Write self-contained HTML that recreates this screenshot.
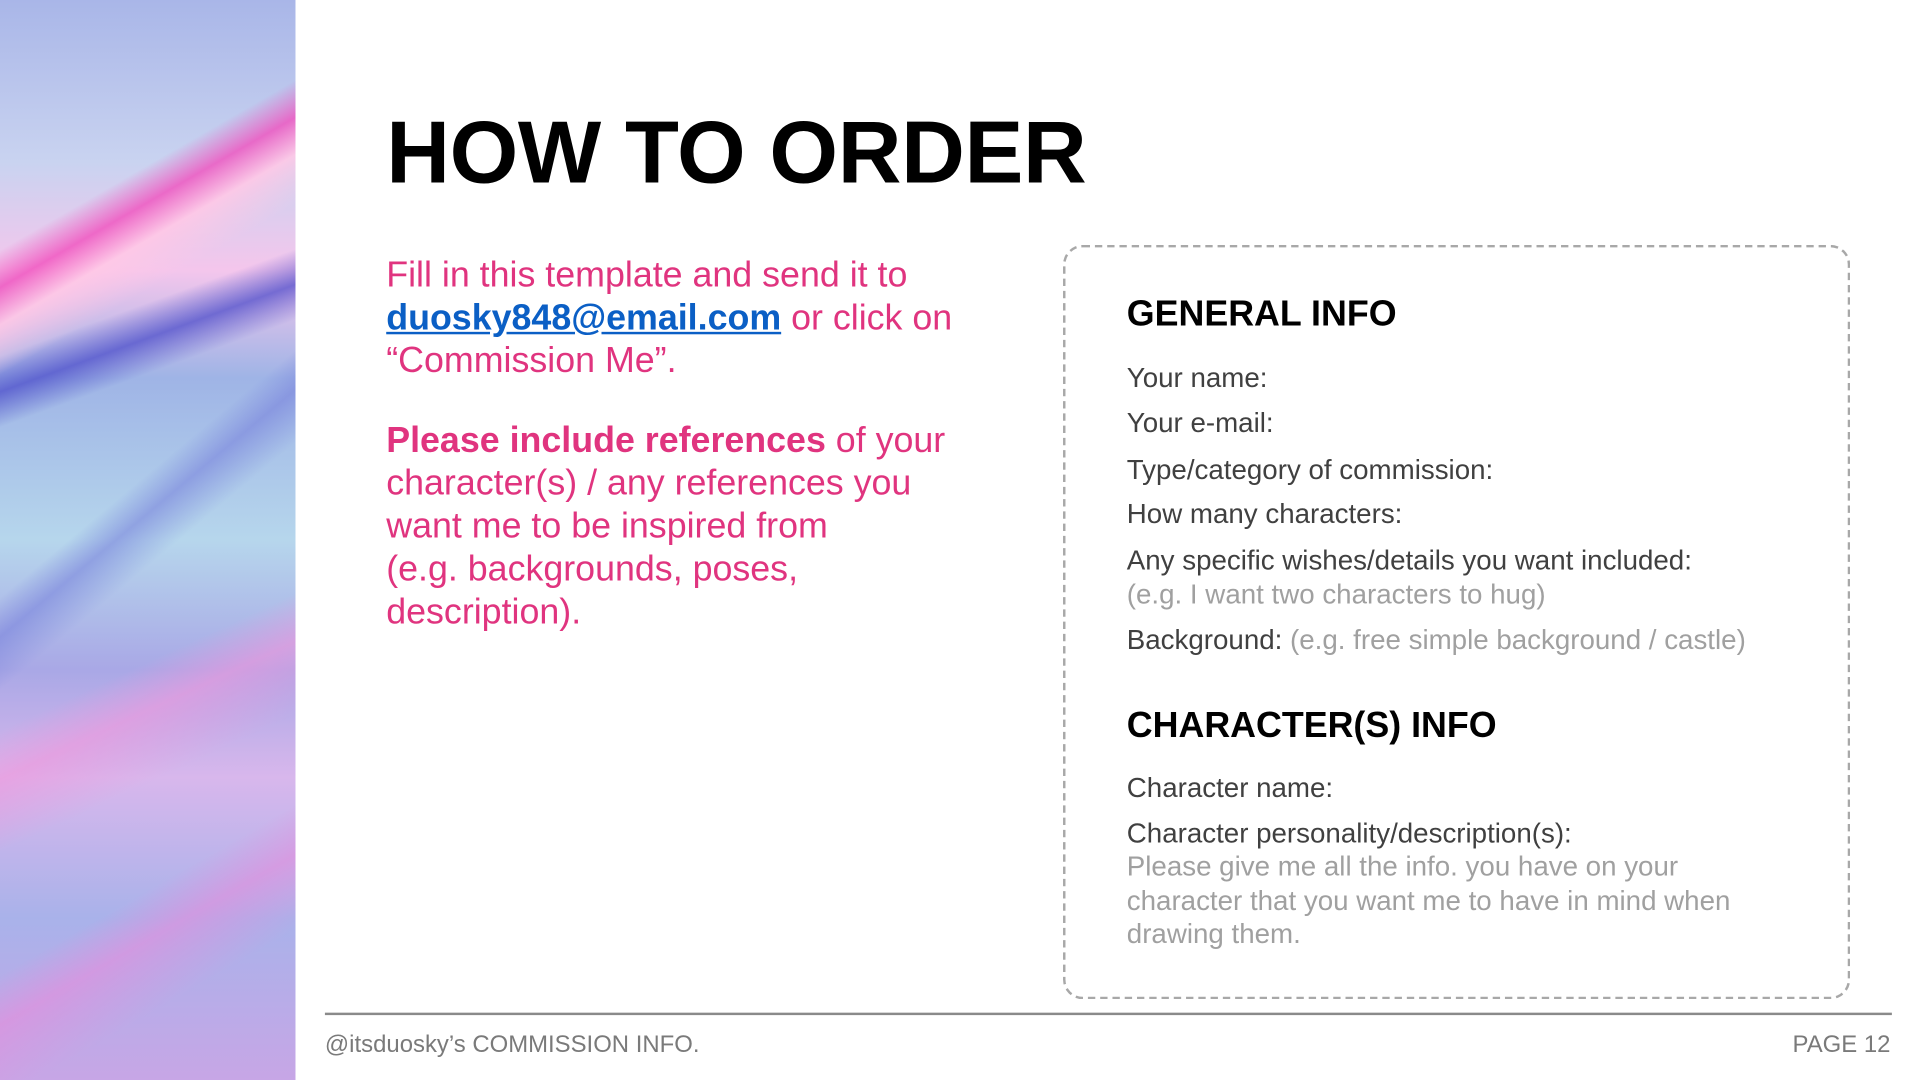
<!DOCTYPE html>
<html><head><meta charset="utf-8"><style>
html,body{margin:0;padding:0;width:1920px;height:1080px;overflow:hidden;background:#fff}
#s{position:absolute;left:0;top:0;width:1566px;height:882px;transform-origin:0 0;transform:scale(1.2261,1.2245);font-family:"Liberation Sans",Arial,sans-serif}
.marble{position:absolute;left:0;top:0;width:241px;height:882px;
background:
linear-gradient(150deg,transparent 20%,rgba(240,80,190,.8) 23%,rgba(255,200,230,.9) 26%,transparent 30%),
linear-gradient(160deg,transparent 30%,rgba(70,70,200,.7) 33%,transparent 36%),
linear-gradient(140deg,transparent 45%,rgba(120,130,220,.6) 48%,transparent 52%),
linear-gradient(155deg,transparent 60%,rgba(240,150,220,.6) 64%,transparent 70%),
linear-gradient(150deg,transparent 78%,rgba(230,140,220,.6) 82%,transparent 88%),
linear-gradient(180deg,#a9b6e8 0%,#c9d3f0 15%,#f4c6ec 25%,#9fb4e6 35%,#b6d6ec 50%,#a9a8e6 62%,#d8b7ec 72%,#a9b2ea 85%,#c7a6e6 100%)}
.t{position:absolute;white-space:nowrap}
h1{position:absolute;left:315px;top:84px;margin:0;font-size:72px;font-weight:bold;letter-spacing:-0.3px}
.left{position:absolute;left:315px;top:208px;font-size:29.2px;line-height:35px;color:#e0347f}
.left a{color:#0b5fc5;font-weight:bold;text-decoration:underline}
.box{position:absolute;left:867px;top:200px;width:638px;height:612px;border:2px dashed #a8a8a8;border-radius:16px}
.h{font-size:29.2px;font-weight:bold;color:#000}
.i{font-size:22.6px;color:#404040}
.g{color:#a0a0a0}
.line{position:absolute;left:265px;top:827px;width:1278px;height:2px;background:#8a8a8a}
.f{font-size:19.5px;color:#7a7a7a}
</style></head><body><div id="s">
<div class="marble"></div>
<h1>HOW TO ORDER</h1>
<div class="left">Fill in this template and send it to<br><a>duosky848@email.com</a> or click on<br>“Commission Me”.<br><div style="height:30px"></div><b>Please include references</b> of your<br>character(s) / any references you<br>want me to be inspired from<br>(e.g. backgrounds, poses,<br>description).</div>
<div class="box"></div>
<div class="t h" style="left:919px;top:241px">GENERAL INFO</div>
<div class="t i" style="left:919px;top:296px">Your name:</div>
<div class="t i" style="left:919px;top:333px">Your e-mail:</div>
<div class="t i" style="left:919px;top:371px">Type/category of commission:</div>
<div class="t i" style="left:919px;top:407px">How many characters:</div>
<div class="t i" style="left:919px;top:445px">Any specific wishes/details you want included:</div>
<div class="t i g" style="left:919px;top:473px">(e.g. I want two characters to hug)</div>
<div class="t i" style="left:919px;top:510px">Background: <span class="g">(e.g. free simple background / castle)</span></div>
<div class="t h" style="left:919px;top:577px">CHARACTER(S) INFO</div>
<div class="t i" style="left:919px;top:631px">Character name:</div>
<div class="t i" style="left:919px;top:668px">Character personality/description(s):</div>
<div class="t i g" style="left:919px;top:694px;line-height:27.5px">Please give me all the info. you have on your<br>character that you want me to have in mind when<br>drawing them.</div>
<div class="line"></div>
<div class="t f" style="left:265px;top:842px">@itsduosky’s COMMISSION INFO.</div>
<div class="t f" style="left:1462px;top:842px">PAGE 12</div>
</div></body></html>
